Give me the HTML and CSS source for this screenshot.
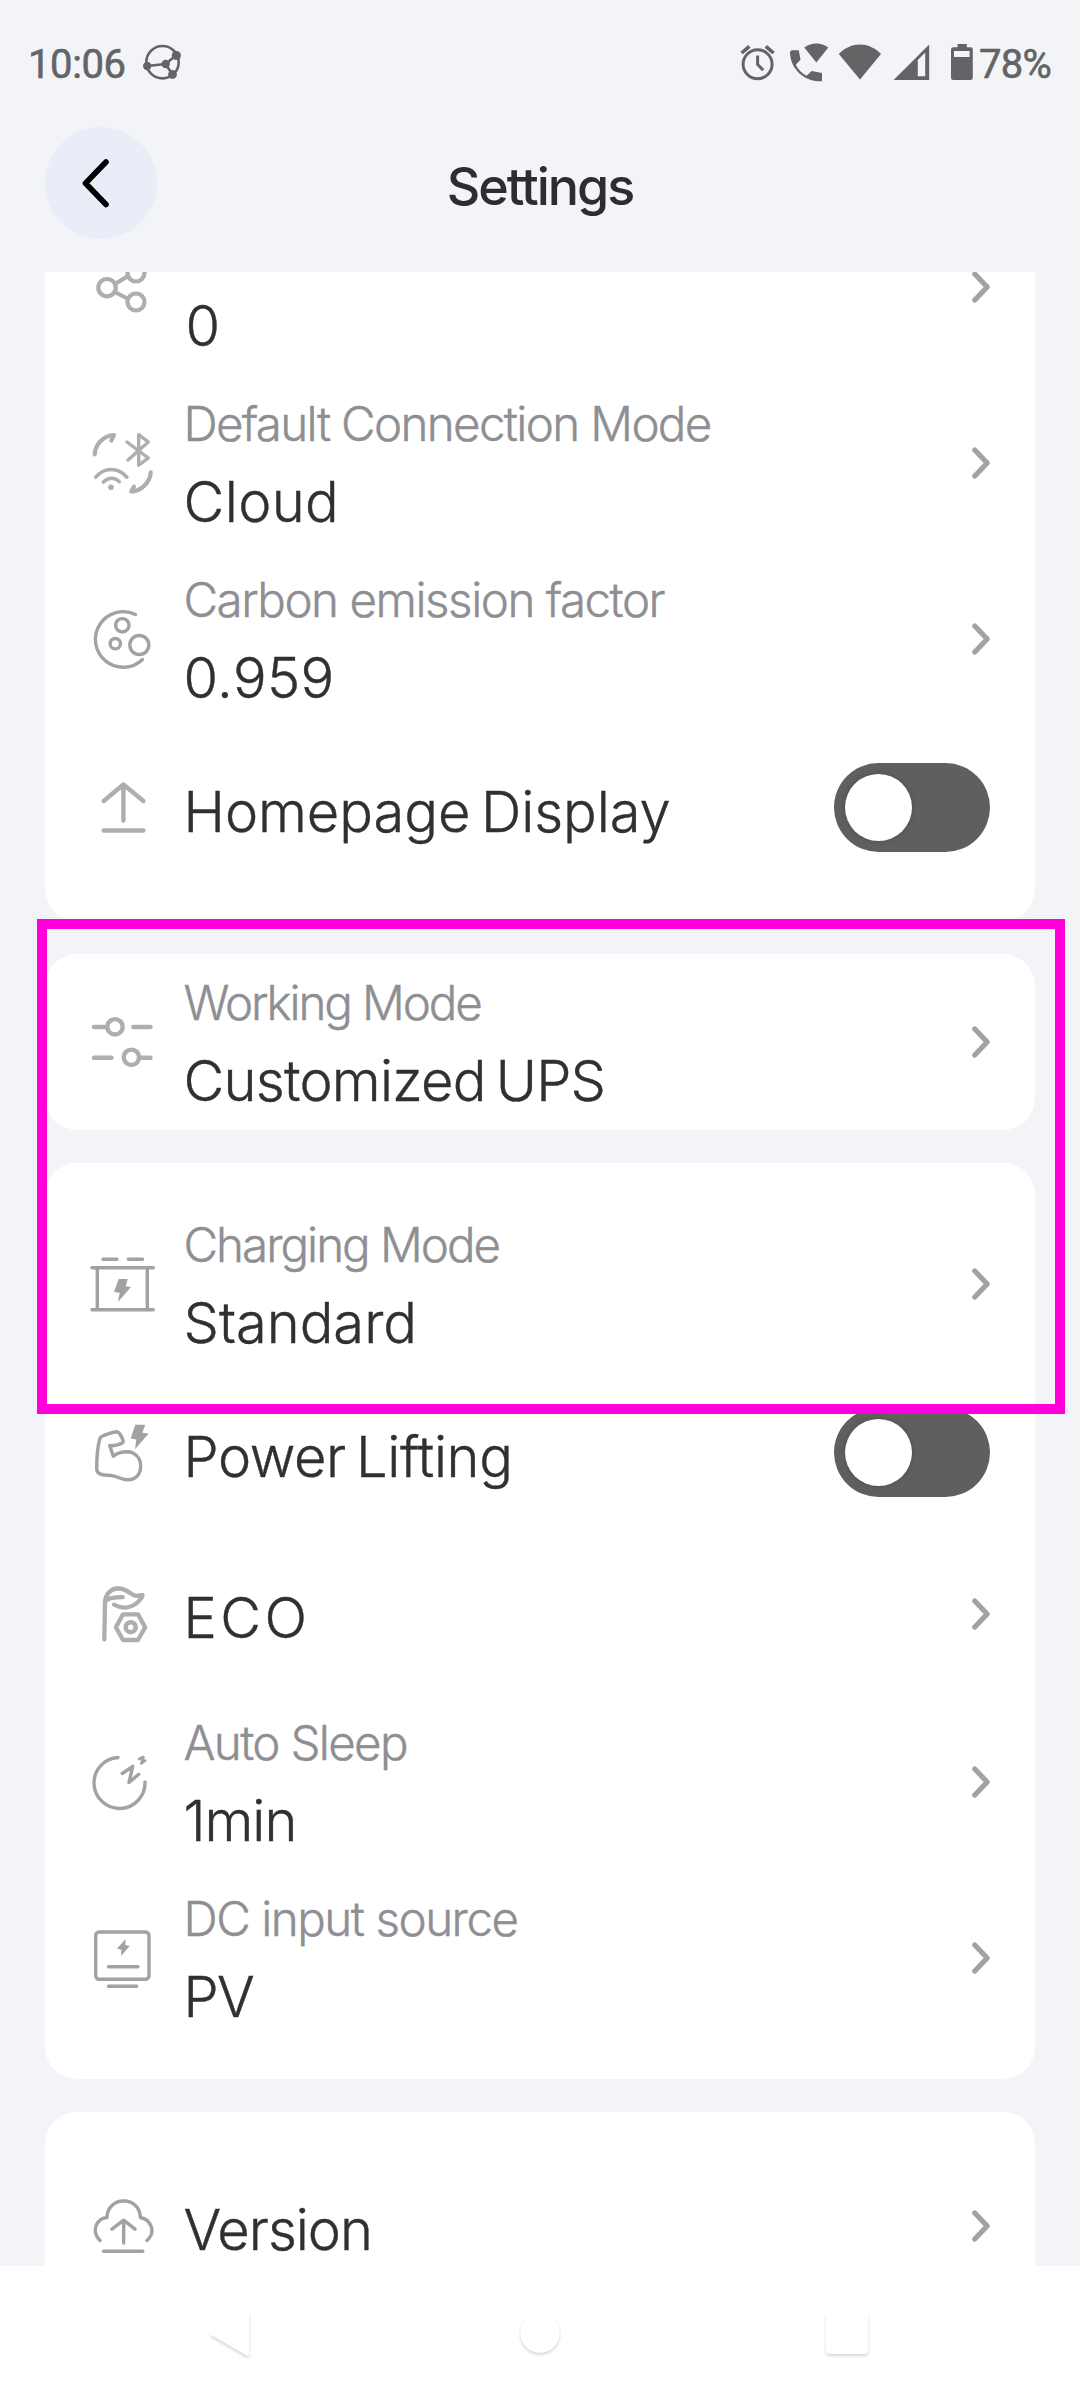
FILE: index.html
```
<!DOCTYPE html>
<html lang="en">
<head>
<meta charset="utf-8">
<title>Settings</title>
<link rel="stylesheet" href="styles.css">
</head>
<body>
<svg class="defs" aria-hidden="true">
  <symbol id="chevron" viewBox="0 0 18 32"><path d="M2.8 3l12.4 13L2.8 29" fill="none" stroke="#a2a2a2" stroke-width="5.2" stroke-linecap="round" stroke-linejoin="round"/></symbol>
</svg>
<div class="screen">
  <div class="status">
    <span class="time">10:06</span>
    <svg class="status-app" viewBox="143 44 39 37" width="39" height="37">
      <g fill="none" stroke="#636466" stroke-width="2.6"><circle cx="162.5" cy="62.2" r="16.2"/><path d="M147 66l18.5-2 11-9M165.5 64l7 10.500"/></g>
      <g fill="#636466"><circle cx="147.200" cy="66" r="4.200"/><circle cx="176.300" cy="55.500" r="4.600"/><circle cx="165.700" cy="64" r="4.200"/><circle cx="172.500" cy="74.500" r="4.400"/></g>
    </svg>
    <svg class="status-icons" viewBox="740 40 234 46" width="234" height="46">
      <g fill="none" stroke="#636466">
        <circle cx="757.6" cy="64.200" r="14.500" stroke-width="3"/>
        <path d="M757.600 55.500v9l5.600 5.600" stroke-width="3"/>
        <path d="M741.600 53l7.800-6.700M765.800 46.300l7.800 6.700" stroke-width="3.600"/>
      </g>
      <g fill="#636466">
        <path d="M791.500 50.300h7.300l1.700 9.500-4.700 5c2.600 5 6 8.500 10.800 11l5-4.700 10.400 1.800v8.400C804 82.200 790 68.500 790 52z"/>
        <path d="M804.300 47.500c7-5.500 17-5.500 24 0L816.300 62.500z"/>
        <path d="M838.800 54c12-12.700 30.200-12.700 42.200 0L860 79.500z"/>
        <path fill-rule="evenodd" d="M893.600 80L929.200 44.500V80zM917.800 60v16.200h7.400V52.500z"/>
        <path fill-rule="evenodd" d="M957.500 47.300V44h9.300v3.300h3.700q2.300 0 2.300 2.300v28.200q0 2.300-2.300 2.300h-17.200q-2.300 0-2.300-2.300V49.600q0-2.300 2.300-2.300zM954 51v6h15.600v-6z"/>
      </g>
    </svg>
    <span class="battery">78%</span>
  </div>

  <div class="header">
    <div class="back"><svg viewBox="0 0 112 112" width="112" height="112"><path d="M61 35L40.500 56.300 61 77.500" fill="none" stroke="#000" stroke-width="5.600" stroke-linecap="round" stroke-linejoin="round"/></svg></div>
    <h1>Settings</h1>
  </div>

  <div class="list">
    <section class="card card-scrolled">
      <div class="row">
        <svg class="icon soft" viewBox="-33 -33 66 66"><g stroke-width="4.200"><circle cx="-15" cy=".7" r="8.700"/><circle cx="14" cy="15" r="8.500"/><circle cx="14" cy="-14" r="8.500"/><path d="M-7-3L6-11M-7 5L6 12"/></g></svg>
        <div class="text"><div class="label"></div><div class="value zero">0</div></div>
        <svg class="chev"><use href="#chevron"/></svg>
      </div>
      <div class="row">
        <svg class="icon soft" viewBox="-33 -33 66 66"><g stroke-width="4.200"><path d="M-27.300-8.500C-27-19-18-27.500-8-28l-2.700 5.500M28.700 9.300C28.500 19 19 28.500 9.300 28.600l2.700-5"/></g><g stroke-width="3.400"><path d="M5-21L26.300-5 16.700 2.200V-28.300L26.300-21 6-3M-26.300 14.300C-18 3.800-4 3.800 5 14.300M-18.700 19.200C-14 14-7 14-2.700 18.700"/></g><circle class="dot" cx="-11" cy="24.300" r="2.800"/></svg>
        <div class="text"><div class="label s16">Default Connection Mode</div><div class="value p4">Cloud</div></div>
        <svg class="chev"><use href="#chevron"/></svg>
      </div>
      <div class="row">
        <svg class="icon" viewBox="-33 -33 66 66"><g stroke-width="3.400"><path d="M13.500-24.500A27.800 27.800 0 1 0 20.500 20.500"/><circle cx=".3" cy="-13.700" r="6.700"/><circle cx="-6.700" cy="4.700" r="5.200"/><circle cx="17.300" cy="6" r="9.500"/></g></svg>
        <div class="text"><div class="label s15">Carbon emission factor</div><div class="value p4">0.959</div></div>
        <svg class="chev"><use href="#chevron"/></svg>
      </div>
      <div class="row single">
        <svg class="icon soft" viewBox="-33 -33 66 66"><g stroke-width="4.400"><path d="M-18.300-7L1.400-23.500 21.400-7M1.400-23V12.500M-18.300 22.500H21.400"/></g></svg>
        <div class="text"><div class="value s0">Homepage Display</div></div>
        <div class="toggle"><i></i></div>
      </div>
    </section>

    <section class="card card-flush">
      <div class="row">
        <svg class="icon soft" viewBox="-33 -33 66 66"><g stroke-width="4.400"><path d="M-28-15H-15.500M11.300-15H28.500M-28 15.700H-10.500M19 15.700H28.500"/><circle cx="-7" cy="-15.200" r="7.700"/><circle cx="9.400" cy="15.300" r="7.700"/></g></svg>
        <div class="text"><div class="label s21">Working Mode</div><div class="value s8">Customized UPS</div></div>
        <svg class="chev"><use href="#chevron"/></svg>
      </div>
    </section>

    <section class="card">
      <div class="row">
        <svg class="icon" viewBox="-33 -33 66 66"><g stroke-width="3.400"><path d="M-19-24.700H-5M6.300-24.700H20.500M-30-16.300H31.300M-30 25.700H31.300M-24.700-16V25M25.300-16V25"/></g><path class="dot" d="M-3.300-5h9L3.700 2.300 9 3-4 18-2.300 8.700-8 8z"/></svg>
        <div class="text"><div class="label s20">Charging Mode</div><div class="value">Standard</div></div>
        <svg class="chev"><use href="#chevron"/></svg>
      </div>
      <div class="row single">
        <svg class="icon" viewBox="-33 -33 66 66"><g stroke-width="3.400"><path d="M-12.300-7.500L-8.700 3.200C-5 0 0-1.200 5.300-1.200 13-1 18.500 5 18.700 12.500 19 22 13 27 5.300 26.800-1 26.500-5 23.500-8.700 22.800-13 22-17 22.500-20.300 21.500-24 20.500-25.200 18-25.300 15.800-25.300 10-24.500-7-22-14.800-21-17.500-9-21-5.300-21.200-2-21 2 -12 1-10.800 0-9-8.500-6.500-12.300-7.500z"/></g><path class="dot" d="M13.300-28.200h10l-3 8 6.400.7L13-3.800l1.300-9.700-5.600-1z"/></svg>
        <div class="text"><div class="value s4">Power Lifting</div></div>
        <div class="toggle"><i></i></div>
      </div>
      <div class="row single">
        <svg class="icon soft" viewBox="-33 -33 66 66"><g stroke-width="4.300"><path d="M-17.700 25.500L-17-12C-16.500-20-11-25.800-3.700-25.500 6-25.300 9-18.500 14-18.200 17-18 19-19 20.500-18.800 21-17 18-14.500 16-12 9-5.500 0-5-8-9.300M-15.700-13.500C-13-16.500-5-16.800.7-16.800M1 .4H16L23.200 13.200 16 26H1L-6.100 13.200z"/><circle cx="8.700" cy="13.200" r="5" stroke-width="4.600"/></g></svg>
        <div class="text"><div class="value p34">ECO</div></div>
        <svg class="chev"><use href="#chevron"/></svg>
      </div>
      <div class="row">
        <svg class="icon" viewBox="-33 -33 66 66"><g stroke-width="3.400"><path d="M-4-24.500A25.500 25.500 0 1 0 23 0M.3-8.500L10.700-15.700 7 .5 16.700-7.700"/><path stroke-width="2.600" d="M17-23L21.500-25 19.300-18.500 23.300-21.500"/></g></svg>
        <div class="text"><div class="label s16">Auto Sleep</div><div class="value s10">1min</div></div>
        <svg class="chev"><use href="#chevron"/></svg>
      </div>
      <div class="row">
        <svg class="icon" viewBox="-33 -33 66 66"><g stroke-width="3.400"><rect x="-26.300" y="-26" width="53.300" height="47.300" rx="3.500"/><path d="M-13.500 8.700H16M-13.500 28.300H14.700"/></g><path class="dot" d="M3.700-19L-5-9.500l4.500 1.500L-1-2 7.700-12 3.200-13z"/></svg>
        <div class="text"><div class="label s15">DC input source</div><div class="value s17">PV</div></div>
        <svg class="chev"><use href="#chevron"/></svg>
      </div>
    </section>

    <section class="card">
      <div class="row single">
        <svg class="icon" viewBox="-33 -33 66 66"><g stroke-width="3.400"><path d="M-22 14.500C-31 5-26-7-15-8.500-15-18-8-25 1.700-25S18.300-18 18.300-8.500C29-6.500 34.500 6 25 14.500M-10 3.200L1.700-5.800 13 3.200M1.700-5V17M-18.500 25.200H20.800"/></g></svg>
        <div class="text"><div class="value s10">Version</div></div>
        <svg class="chev"><use href="#chevron"/></svg>
      </div>
    </section>
  </div>

  <div class="navbar">
    <svg viewBox="200 2266 680 134" width="680" height="134">
      <g fill="#fff"><path d="M209.500 2334L247 2312.500q2-1 2 1.500V2354q0 3-2.500 1.500z"/><circle cx="540" cy="2333" r="19.700"/><rect x="826" y="2312" width="42" height="42" rx="4"/></g>
    </svg>
  </div>
  <div class="highlight"></div>
</div>
</body>
</html>
```
FILE: styles.css
```
* { box-sizing: border-box; }
body { margin: 0; background: #f3f4f8; font-family: Inter, "Liberation Sans", sans-serif; }
.defs { position: absolute; width: 0; height: 0; }
.screen { position: relative; width: 1080px; height: 2400px; display: flex; flex-direction: column; overflow: hidden; background: #f3f4f8; }

.status { height: 127px; padding: 0 29px 0 28px; display: flex; align-items: center; color: #636466; font: 400 40px/48px Roboto, sans-serif; -webkit-text-stroke: .6px #636466; }
.time { width: 115px; letter-spacing: -.4px; padding-top: 2px; }
.status-app { margin-top: -2px; }
.status-icons { margin-left: auto; margin-right: 5px; margin-top: -1px; }
.battery { width: 72px; letter-spacing: -.7px; padding-top: 2px; white-space: nowrap; }

.header { height: 112px; margin: 0 45px 33px; display: grid; grid-template-columns: 112px 1fr 112px; align-items: center; }
.back { width: 112px; height: 112px; border-radius: 50%; background: #e9edf7; }
.back svg { display: block; }
h1 { margin: 0; padding: 7px 0 0; text-align: center; font-size: 52px; line-height: 64px; font-weight: 500; letter-spacing: -2px; color: #2c2d2f; }

.list { height: 1994px; padding: 0 45px; display: flex; flex-direction: column; gap: 33px; overflow: hidden; }
.card { flex: none; background: #fff; border-radius: 32px; padding: 33px 0; }
.card-scrolled { margin-top: -73px; padding-top: 0; }
.card-flush { padding: 0; }
.row { height: 176px; padding: 0 45px 0 44px; display: flex; align-items: center; }
.row.single { height: 161px; }
.icon { flex: none; width: 66px; height: 66px; margin-right: 28.5px; fill: none; stroke: #a2a2a2; color: #a2a2a2; stroke-linecap: round; stroke-linejoin: round; }
.icon.soft { stroke: #aeaeb2; color: #aeaeb2; }
.dot { fill: currentColor; stroke: none; }
.text { flex: 1; font-weight: 300; line-height: 78px; white-space: nowrap; -webkit-text-stroke-width: .4px; }
.label { height: 78px; font-size: 47.5px; color: #8e8e93; }
.value { height: 78px; font-size: 56px; color: #2f3030; word-spacing: -5px; }
.single .text { padding-top: 8px; }
.zero { padding-left: 2px; }
.chev { flex: none; width: 18px; height: 32px; }

.toggle { width: 156px; height: 89px; padding: 11px; border-radius: 45px; background: #5f5f5f; }
.toggle i { display: block; width: 67px; height: 67px; border-radius: 50%; background: #fff; box-shadow: 0 0 5px rgba(0, 0, 0, .2); }

.s0 { letter-spacing: -.05px; }
.s4 { letter-spacing: -.4px; }
.s8 { letter-spacing: -.750px; }
.s10 { letter-spacing: -1.020px; }
.s15 { letter-spacing: -1.480px; }
.s16 { letter-spacing: -1.660px; }
.s17 { letter-spacing: -1.680px; }
.s20 { letter-spacing: -2px; }
.s21 { letter-spacing: -2.100px; }
.p4 { letter-spacing: .4px; }
.p34 { letter-spacing: 3.400px; }

.navbar { height: 134px; background: #fff; display: flex; justify-content: center; }
.navbar svg { filter: drop-shadow(0 2px 1.500px rgba(0, 0, 0, .16)); }

.highlight { position: absolute; left: 37px; top: 919px; width: 1028px; height: 495px; border: 10px solid #ff00dc; }
```
